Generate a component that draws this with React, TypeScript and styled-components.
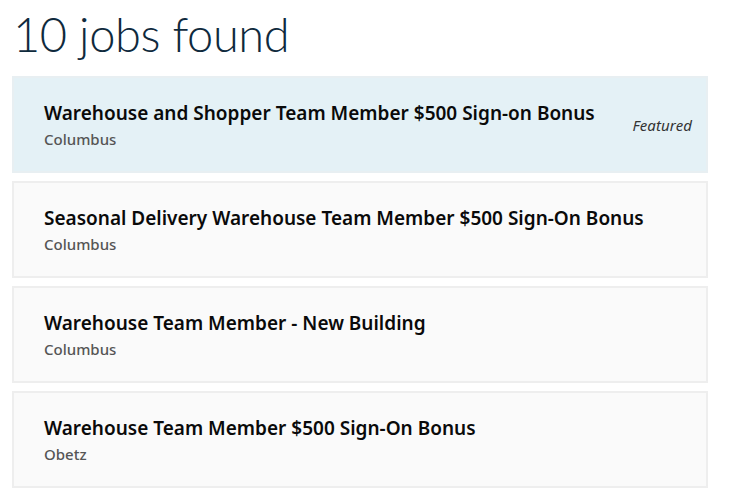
import React from "react";
import styled, { createGlobalStyle } from "styled-components";

const Global = createGlobalStyle`
  html, body { margin: 0; padding: 0; background: #fff; }
  body { font-family: "Noto Sans", Arial, sans-serif; }
`;

const Page = styled.div`
  padding: 0 25px 0 12px;
  width: 733px;
  box-sizing: border-box;
`;

const Heading = styled.h1`
  margin: 0;
  padding: 4px 0 0 1px;
  height: 76px;
  box-sizing: border-box;
  font-family: Lato, "Noto Sans", sans-serif;
  font-weight: 300;
  font-size: 47px;
  line-height: 60px;
  color: #0f2a3d;
  letter-spacing: -0.4px;
`;

const List = styled.div`
  display: flex;
  flex-direction: column;
  gap: 8px;
`;

const Card = styled.div<{ $featured?: boolean }>`
  display: flex;
  align-items: flex-start;
  justify-content: space-between;
  height: 97px;
  box-sizing: border-box;
  padding: 22px 14px 0 30px;
  background: ${(p) => (p.$featured ? "#e4f1f6" : "#fafafa")};
  border: 2px solid ${(p) => (p.$featured ? "#e8eff2" : "#eeeeee")};
`;

const Info = styled.div`
  display: flex;
  flex-direction: column;
  gap: 3px;
`;

const Title = styled.div`
  font-family: "Noto Sans", sans-serif;
  font-weight: 600;
  font-size: 19px;
  line-height: 26px;
  color: #0a0a0a;
`;

const Location = styled.div`
  font-family: "Noto Sans", sans-serif;
  font-weight: 500;
  font-size: 15px;
  line-height: 20px;
  color: #555;
`;

const Badge = styled.span`
  margin-top: 15px;
  font-family: "Noto Sans", sans-serif;
  font-style: italic;
  font-size: 15px;
  letter-spacing: 0.1px;
  color: #333;
`;

const jobs = [
  { title: "Warehouse and Shopper Team Member $500 Sign-on Bonus", loc: "Columbus", featured: true },
  { title: "Seasonal Delivery Warehouse Team Member $500 Sign-On Bonus", loc: "Columbus" },
  { title: "Warehouse Team Member - New Building", loc: "Columbus" },
  { title: "Warehouse Team Member $500 Sign-On Bonus", loc: "Obetz" },
];

export default function App() {
  return (
    <Page>
      <Global />
      <Heading>10 jobs found</Heading>
      <List>
        {jobs.map((j) => (
          <Card key={j.title} $featured={j.featured}>
            <Info>
              <Title>{j.title}</Title>
              <Location>{j.loc}</Location>
            </Info>
            {j.featured && <Badge>Featured</Badge>}
          </Card>
        ))}
      </List>
    </Page>
  );
}
